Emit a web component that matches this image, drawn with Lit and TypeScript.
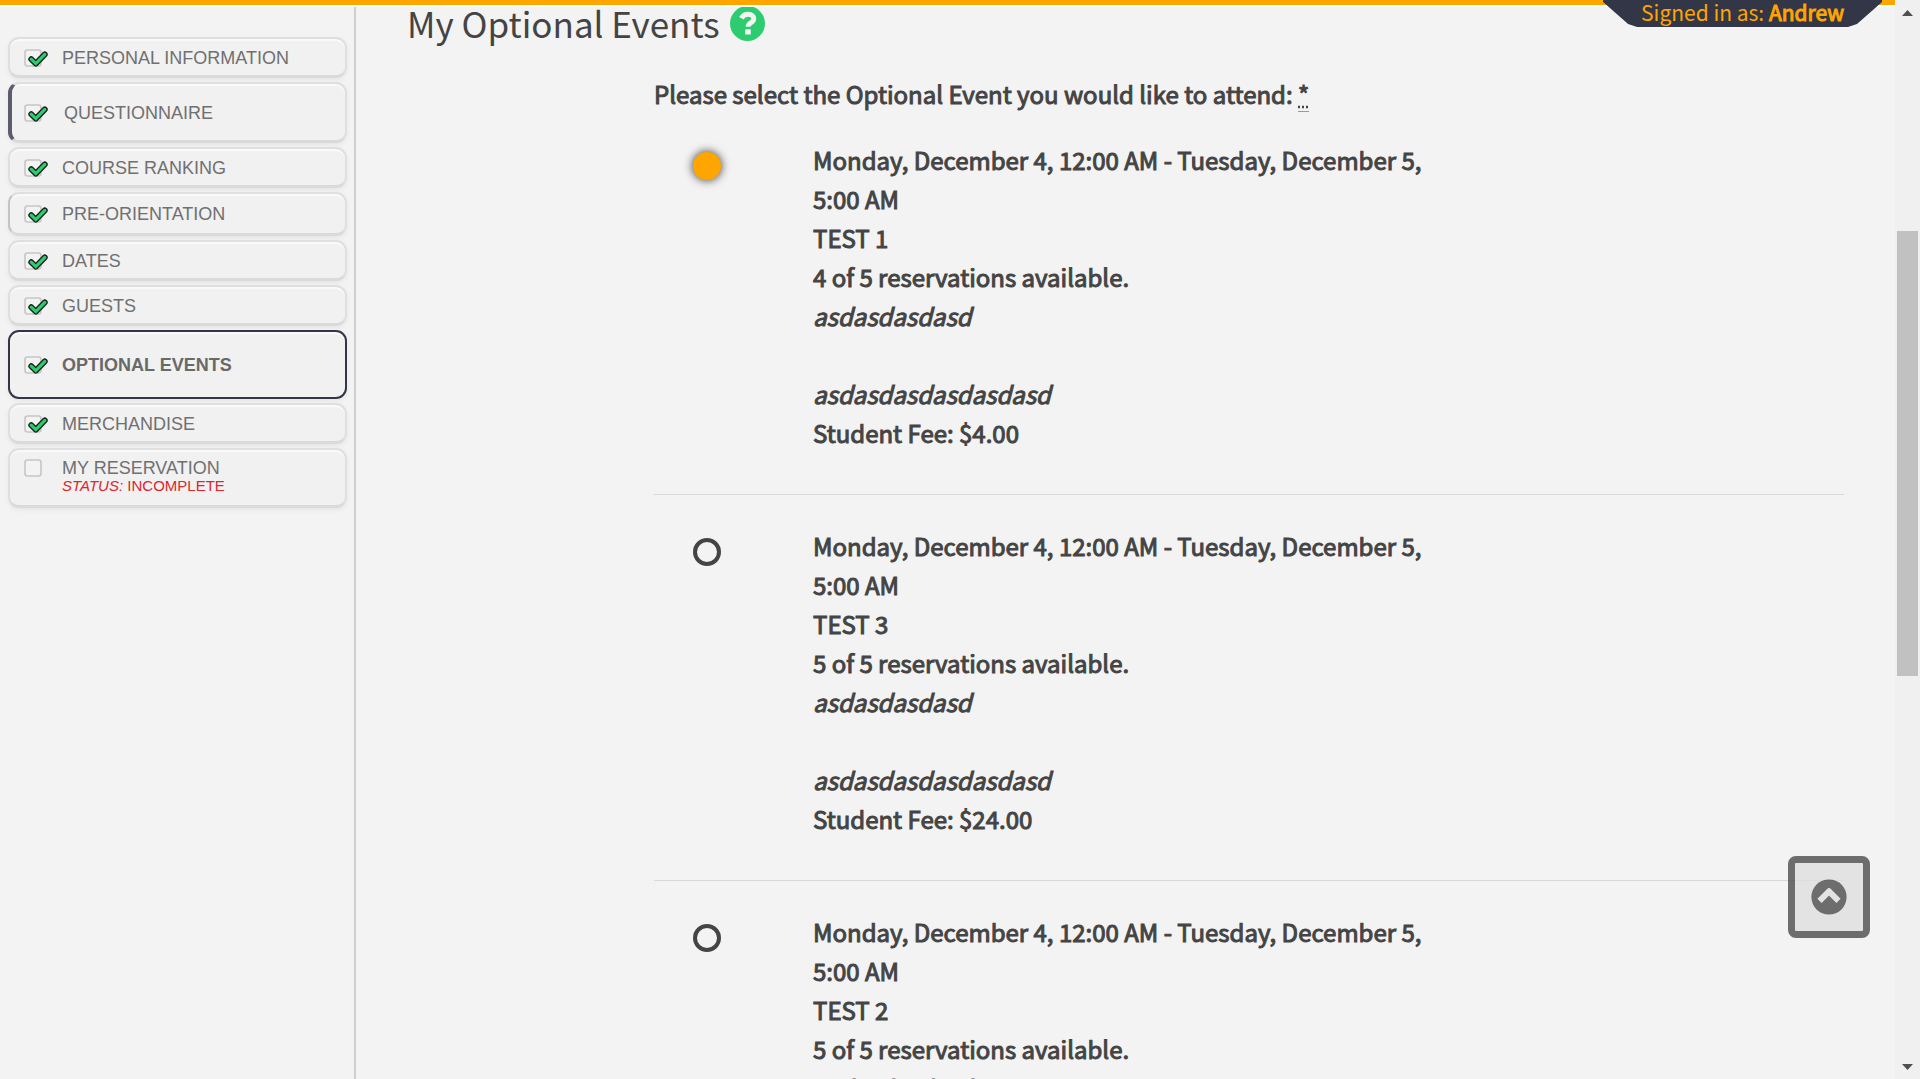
import { LitElement, html, css, svg, nothing } from "lit";
import { customElement, property, state } from "lit/decorators.js";
import { classMap } from "lit/directives/class-map.js";

interface Step {
  label: string;
  done: boolean;
  kind?: "tall" | "medium" | "current" | "status";
}

interface EventOption {
  id: string;
  name: string;
  available: number;
  fee: string;
}

const STEPS: Step[] = [
  { label: "Personal Information", done: true },
  { label: "Questionnaire", done: true, kind: "tall" },
  { label: "Course Ranking", done: true },
  { label: "Pre-Orientation", done: true, kind: "medium" },
  { label: "Dates", done: true },
  { label: "Guests", done: true },
  { label: "Optional Events", done: true, kind: "current" },
  { label: "Merchandise", done: true },
  { label: "My Reservation", done: false, kind: "status" },
];

const EVENTS: EventOption[] = [
  { id: "test-1", name: "TEST 1", available: 4, fee: "$4.00" },
  { id: "test-3", name: "TEST 3", available: 5, fee: "$24.00" },
  { id: "test-2", name: "TEST 2", available: 5, fee: "$14.00" },
];

@customElement("step-nav")
export class StepNav extends LitElement {
  static styles = css`
    :host {
      display: block;
      font-family: "Liberation Sans", Arial, sans-serif;
    }
    .list {
      display: flex;
      flex-direction: column;
      gap: 4px;
      margin: 0;
      padding: 0;
      list-style: none;
    }
    .step {
      box-sizing: border-box;
      display: flex;
      align-items: center;
      gap: 14px;
      min-height: 41px;
      padding: 1px 14px 0;
      border: 2px solid #dfdfdf;
      border-bottom: 3px solid #dadada;
      border-radius: 11px;
      background: #f1f1f1;
      box-shadow: inset 0 2px 1px #fafafa, 0 2px 4px #e6e6e6;
      color: #707070;
      font-size: 18px;
      line-height: 18px;
      text-decoration: none;
      text-transform: uppercase;
    }
    .tall {
      min-height: 61px;
      border-left: 4px solid #5b5d6e;
      padding-left: 12px;
      gap: 16px;
    }
    .medium {
      min-height: 44px;
      border-left-color: #c4c4c4;
    }
    .current {
      min-height: 69px;
      border: 2px solid #333646;
      font-weight: bold;
      color: #696969;
    }
    .status {
      min-height: 60px;
      align-items: flex-start;
      padding-top: 9px;
    }
    .icon {
      flex: none;
      width: 24px;
      height: 18px;
    }
    .note {
      display: block;
      font-size: 15px;
      color: #e0252b;
    }
  `;

  render() {
    return html`
      <nav aria-label="Registration steps">
        <ul class="list">
          ${STEPS.map(
            (s) => html`<li>
              <a
                class=${classMap({ step: true, [s.kind ?? "plain"]: true })}
                href="#"
                aria-current=${s.kind === "current" ? "step" : nothing}
              >
                <svg class="icon" viewBox="0 0 24 18" aria-hidden="true">
                  <rect x="1" y="1" width="16" height="16" rx="2.5" fill="#f3f3f3" stroke="#c6c6c6" stroke-width="1.6" />
                  ${s.done
                    ? svg`<path d="M7.2 10.2L11.8 14.6L20.8 5.4" fill="none" stroke="#17221c" stroke-width="5.8" stroke-linecap="round" stroke-linejoin="round" />
                      <path d="M7.2 10.2L11.8 14.6L20.8 5.4" fill="none" stroke="#2ecc71" stroke-width="3.2" stroke-linecap="round" stroke-linejoin="miter" />`
                    : nothing}
                </svg>
                <span
                  >${s.label}${s.kind === "status"
                    ? html`<span class="note"><em>Status:</em> Incomplete</span>`
                    : nothing}</span
                >
              </a>
            </li>`
          )}
        </ul>
      </nav>
    `;
  }
}

@customElement("event-option")
export class EventOptionRow extends LitElement {
  static styles = css`
    :host {
      display: block;
      padding-bottom: 42px;
      border-bottom: 1px solid #d8d8d8;
    }
    .row {
      display: grid;
      grid-template-columns: 106px minmax(0, 628px);
      column-gap: 14px;
      padding-left: 39px;
    }
    .radio {
      appearance: none;
      box-sizing: border-box;
      width: 28px;
      height: 28px;
      margin: 12px 0 0;
      border: 4px solid #444;
      border-radius: 50%;
      background: transparent;
    }
    .radio:checked {
      border-color: #ffa500;
      background: #ffa500;
      box-shadow: 0 0 8px 1px #555;
    }
    .text {
      display: flex;
      flex-direction: column;
    }
    .blank {
      height: 39px;
    }
  `;

  @property({ attribute: false }) option!: EventOption;
  @property({ type: Boolean }) checked = false;

  private pick() {
    this.dispatchEvent(new CustomEvent("pick", { detail: this.option.id }));
  }

  render() {
    const o = this.option;
    return html`
      <div class="row">
        <input class="radio" type="radio" id=${o.id} name="event" .checked=${this.checked} @change=${this.pick} />
        <label class="text" for=${o.id}>
          <span>Monday, December 4, 12:00 AM - Tuesday, December 5, 5:00 AM</span>
          <span>${o.name}</span>
          <span>${o.available} of 5 reservations available.</span>
          <em>asdasdasdasd</em>
          <span class="blank"></span>
          <em>asdasdasdasdasdasd</em>
          <span>Student Fee: ${o.fee}</span>
        </label>
      </div>
    `;
  }
}

@customElement("app-root")
export class AppRoot extends LitElement {
  static styles = css`
    :host {
      display: flex;
      position: relative;
      height: 100vh;
      overflow: hidden;
      background: #f3f3f3;
      color: #444;
      font-family: "Noto Sans CJK SC", "Open Sans", sans-serif;
    }
    .page {
      flex: 1;
      min-width: 0;
      display: grid;
      grid-template-columns: 356px minmax(0, 1fr);
      grid-template-rows: auto minmax(0, 1fr);
    }
    .bar {
      grid-column: 1 / -1;
      z-index: 1;
      height: 5px;
      background: #ffa500;
      border-bottom: 2px solid #fff;
    }
    .side {
      padding: 30px 7px 0 8px;
      border-right: 2px solid #cfcfcf;
    }
    .main {
      padding: 0 51px;
    }
    .title {
      display: flex;
      align-items: center;
      gap: 10px;
      margin: -2px 0 0;
      font-size: 35px;
      font-weight: 400;
      line-height: 36px;
    }
    .help {
      display: flex;
      padding: 0;
      border: 0;
      background: none;
    }
    .form {
      padding: 0 0 0 247px;
      font-size: 24px;
      line-height: 39px;
      -webkit-text-stroke: 1px #444;
    }
    .prompt {
      display: block;
      padding: 33px 0 27px;
    }
    .req {
      text-decoration: underline dotted;
      border-bottom: 1px solid #999;
    }
    .events {
      display: flex;
      flex-direction: column;
      gap: 31px;
    }
    .user {
      position: absolute;
      z-index: 2;
      top: 0;
      right: 38px;
      box-sizing: border-box;
      height: 27px;
      padding: 0 38px;
      background: #333646;
      color: #ffa500;
      font-size: 21px;
      line-height: 25px;
      clip-path: polygon(0 0, 100% 0, 100% 2px, calc(100% - 25px) 24px, calc(100% - 34px) 27px, 34px 27px, 25px 24px, 0 2px);
    }
    .name {
      -webkit-text-stroke: 1px #ffa500;
    }
    .top {
      position: absolute;
      right: 50px;
      bottom: 141px;
      display: flex;
      align-items: center;
      justify-content: center;
      width: 82px;
      height: 82px;
      padding: 0;
      border: 7px solid #444;
      border-radius: 8px;
      background: #dfdfdf;
      opacity: 0.76;
    }
    .scroll {
      display: flex;
      flex-direction: column;
      align-items: center;
      width: 25px;
      background: #f0f0f0;
    }
    .arrow {
      flex: none;
      width: 25px;
      height: 25px;
    }
    .track {
      flex: 1;
      width: 21px;
      display: grid;
      grid-template-rows: 20% 43.3% 1fr;
    }
    .thumb {
      grid-row: 2;
      background: #c1c1c1;
    }
  `;

  @state() private selected = "test-1";

  render() {
    return html`
      <div class="page">
        <div class="bar"></div>
        <aside class="side"><step-nav></step-nav></aside>
        <main class="main">
          <h1 class="title">
            My Optional Events
            <button class="help" type="button" aria-label="Help">
              <svg width="35" height="35" viewBox="0 0 35 35" aria-hidden="true">
                <circle cx="17.5" cy="17.5" r="17.5" fill="#2ecc71" />
                <path d="M11.3 12.2C12.8 9.6 15 8.3 18 8.3C21.6 8.3 23.7 10.2 23.7 12.7C23.7 17 18.1 16.5 18.1 20.8" fill="none" stroke="#f3f3f3" stroke-width="5" />
                <rect x="15.2" y="23.2" width="5.6" height="5.4" rx="0.6" fill="#f3f3f3" />
              </svg>
            </button>
          </h1>
          <div class="form" role="radiogroup" aria-labelledby="prompt">
            <span class="prompt" id="prompt"
              >Please select the Optional Event you would like to attend: <abbr class="req">*</abbr></span
            >
            <div class="events">
              ${EVENTS.map(
                (e) => html`<event-option
                  .option=${e}
                  ?checked=${e.id === this.selected}
                  @pick=${(ev: CustomEvent<string>) => (this.selected = ev.detail)}
                ></event-option>`
              )}
            </div>
          </div>
        </main>
      </div>
      <div class="scroll" aria-hidden="true">
        <svg class="arrow" viewBox="0 0 25 25"><path d="M7 16L12.5 10L18 16Z" fill="#505050" /></svg>
        <div class="track"><div class="thumb"></div></div>
        <svg class="arrow" viewBox="0 0 25 25"><path d="M7 10L12.5 16L18 10Z" fill="#505050" /></svg>
      </div>
      <div class="user">Signed in as: <span class="name">Andrew</span></div>
      <button class="top" type="button" aria-label="Back to top">
        <svg width="36" height="36" viewBox="0 0 36 36" aria-hidden="true">
          <circle cx="18" cy="18" r="17.6" fill="#444" />
          <path d="M8.5 21.8L18 12.3L27.5 21.8" fill="none" stroke="#dfdfdf" stroke-width="6" stroke-linejoin="round" />
        </svg>
      </button>
    `;
  }
}
